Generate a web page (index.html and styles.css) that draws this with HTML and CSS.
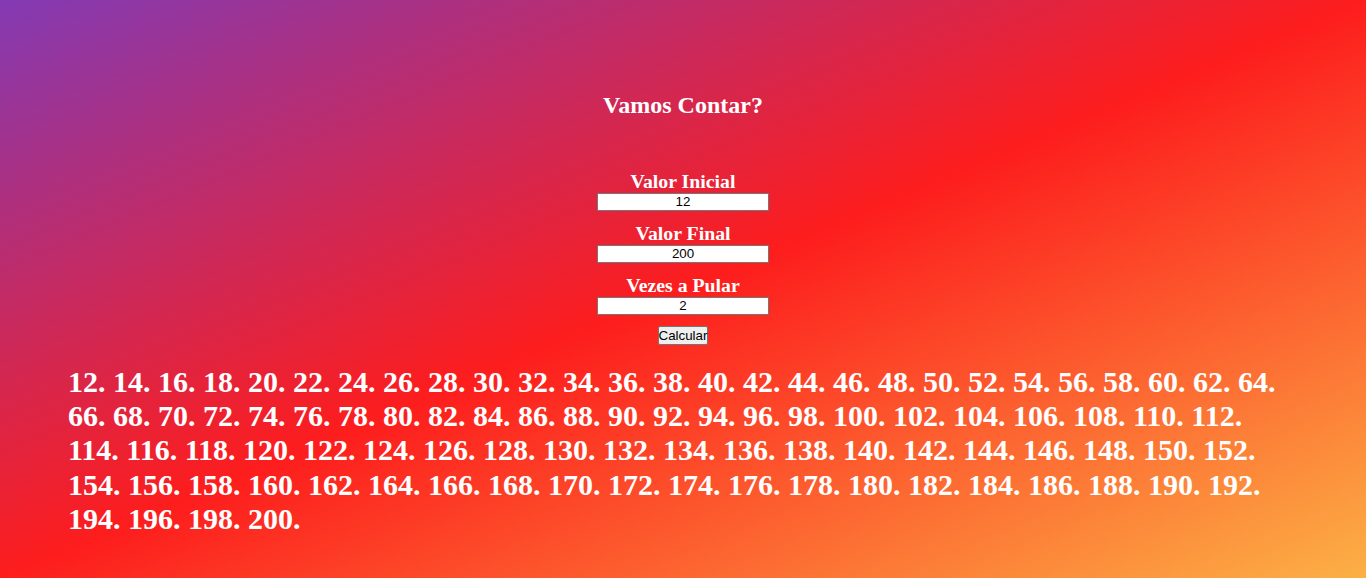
FILE: index.html
```html
<!DOCTYPE html>
<html lang="pt-BR">
<head>
<meta charset="utf-8">
<title>Vamos Contar?</title>
<link rel="stylesheet" href="styles.css">
</head>
<body>
<main class="page">
  <h2 class="title">Vamos Contar?</h2>
  <form class="form">
    <label class="label" for="ini">Valor Inicial</label>
    <input class="field" id="ini" type="text" value="12">
    <label class="label" for="fim">Valor Final</label>
    <input class="field" id="fim" type="text" value="200">
    <label class="label" for="passo">Vezes a Pular</label>
    <input class="field" id="passo" type="text" value="2">
    <button class="btn" type="button">Calcular</button>
  </form>
  <p class="result">12. 14. 16. 18. 20. 22. 24. 26. 28. 30. 32. 34. 36. 38. 40. 42. 44. 46. 48. 50. 52. 54. 56. 58. 60. 62. 64. 66. 68. 70. 72. 74. 76. 78. 80. 82. 84. 86. 88. 90. 92. 94. 96. 98. 100. 102. 104. 106. 108. 110. 112. 114. 116. 118. 120. 122. 124. 126. 128. 130. 132. 134. 136. 138. 140. 142. 144. 146. 148. 150. 152. 154. 156. 158. 160. 162. 164. 166. 168. 170. 172. 174. 176. 178. 180. 182. 184. 186. 188. 190. 192. 194. 196. 198. 200.</p>
</main>
</body>
</html>
```
FILE: styles.css
```css
html {
  height: 100%;
  background: linear-gradient(to bottom right, #833ab4, #fd1d1d, #fcb045);
}

body {
  margin: 0;
  font-family: "Liberation Serif", "Times New Roman", serif;
  color: #ffffff;
}

.page {
  display: flex;
  flex-direction: column;
  align-items: center;
}

.title {
  margin: 92px 0 0;
  font-size: 24px;
  font-weight: bold;
  line-height: 27.6px;
}

.form {
  margin-top: 50px;
  display: flex;
  flex-direction: column;
  align-items: center;
}

.label {
  display: block;
  font-size: 19.8px;
  font-weight: bold;
  line-height: 23px;
}

.field {
  box-sizing: border-box;
  width: 172px;
  height: 18px;
  margin: 0 0 11px;
  padding: 0 2px;
  border: 1px solid #767676;
  background: #ffffff;
  color: #000000;
  font-family: "Liberation Sans", Arial, sans-serif;
  font-size: 13.33px;
  text-align: center;
}

.btn {
  margin: 0;
  padding: 1px 0;
  border: 1px solid #767676;
  border-radius: 2px;
  background: #efefef;
  color: #000000;
  font-family: "Liberation Sans", Arial, sans-serif;
  font-size: 13.33px;
  line-height: normal;
}

.result {
  align-self: stretch;
  margin: 20px 68px 0;
  font-size: 30px;
  font-weight: bold;
  line-height: 34.4px;
}
```
